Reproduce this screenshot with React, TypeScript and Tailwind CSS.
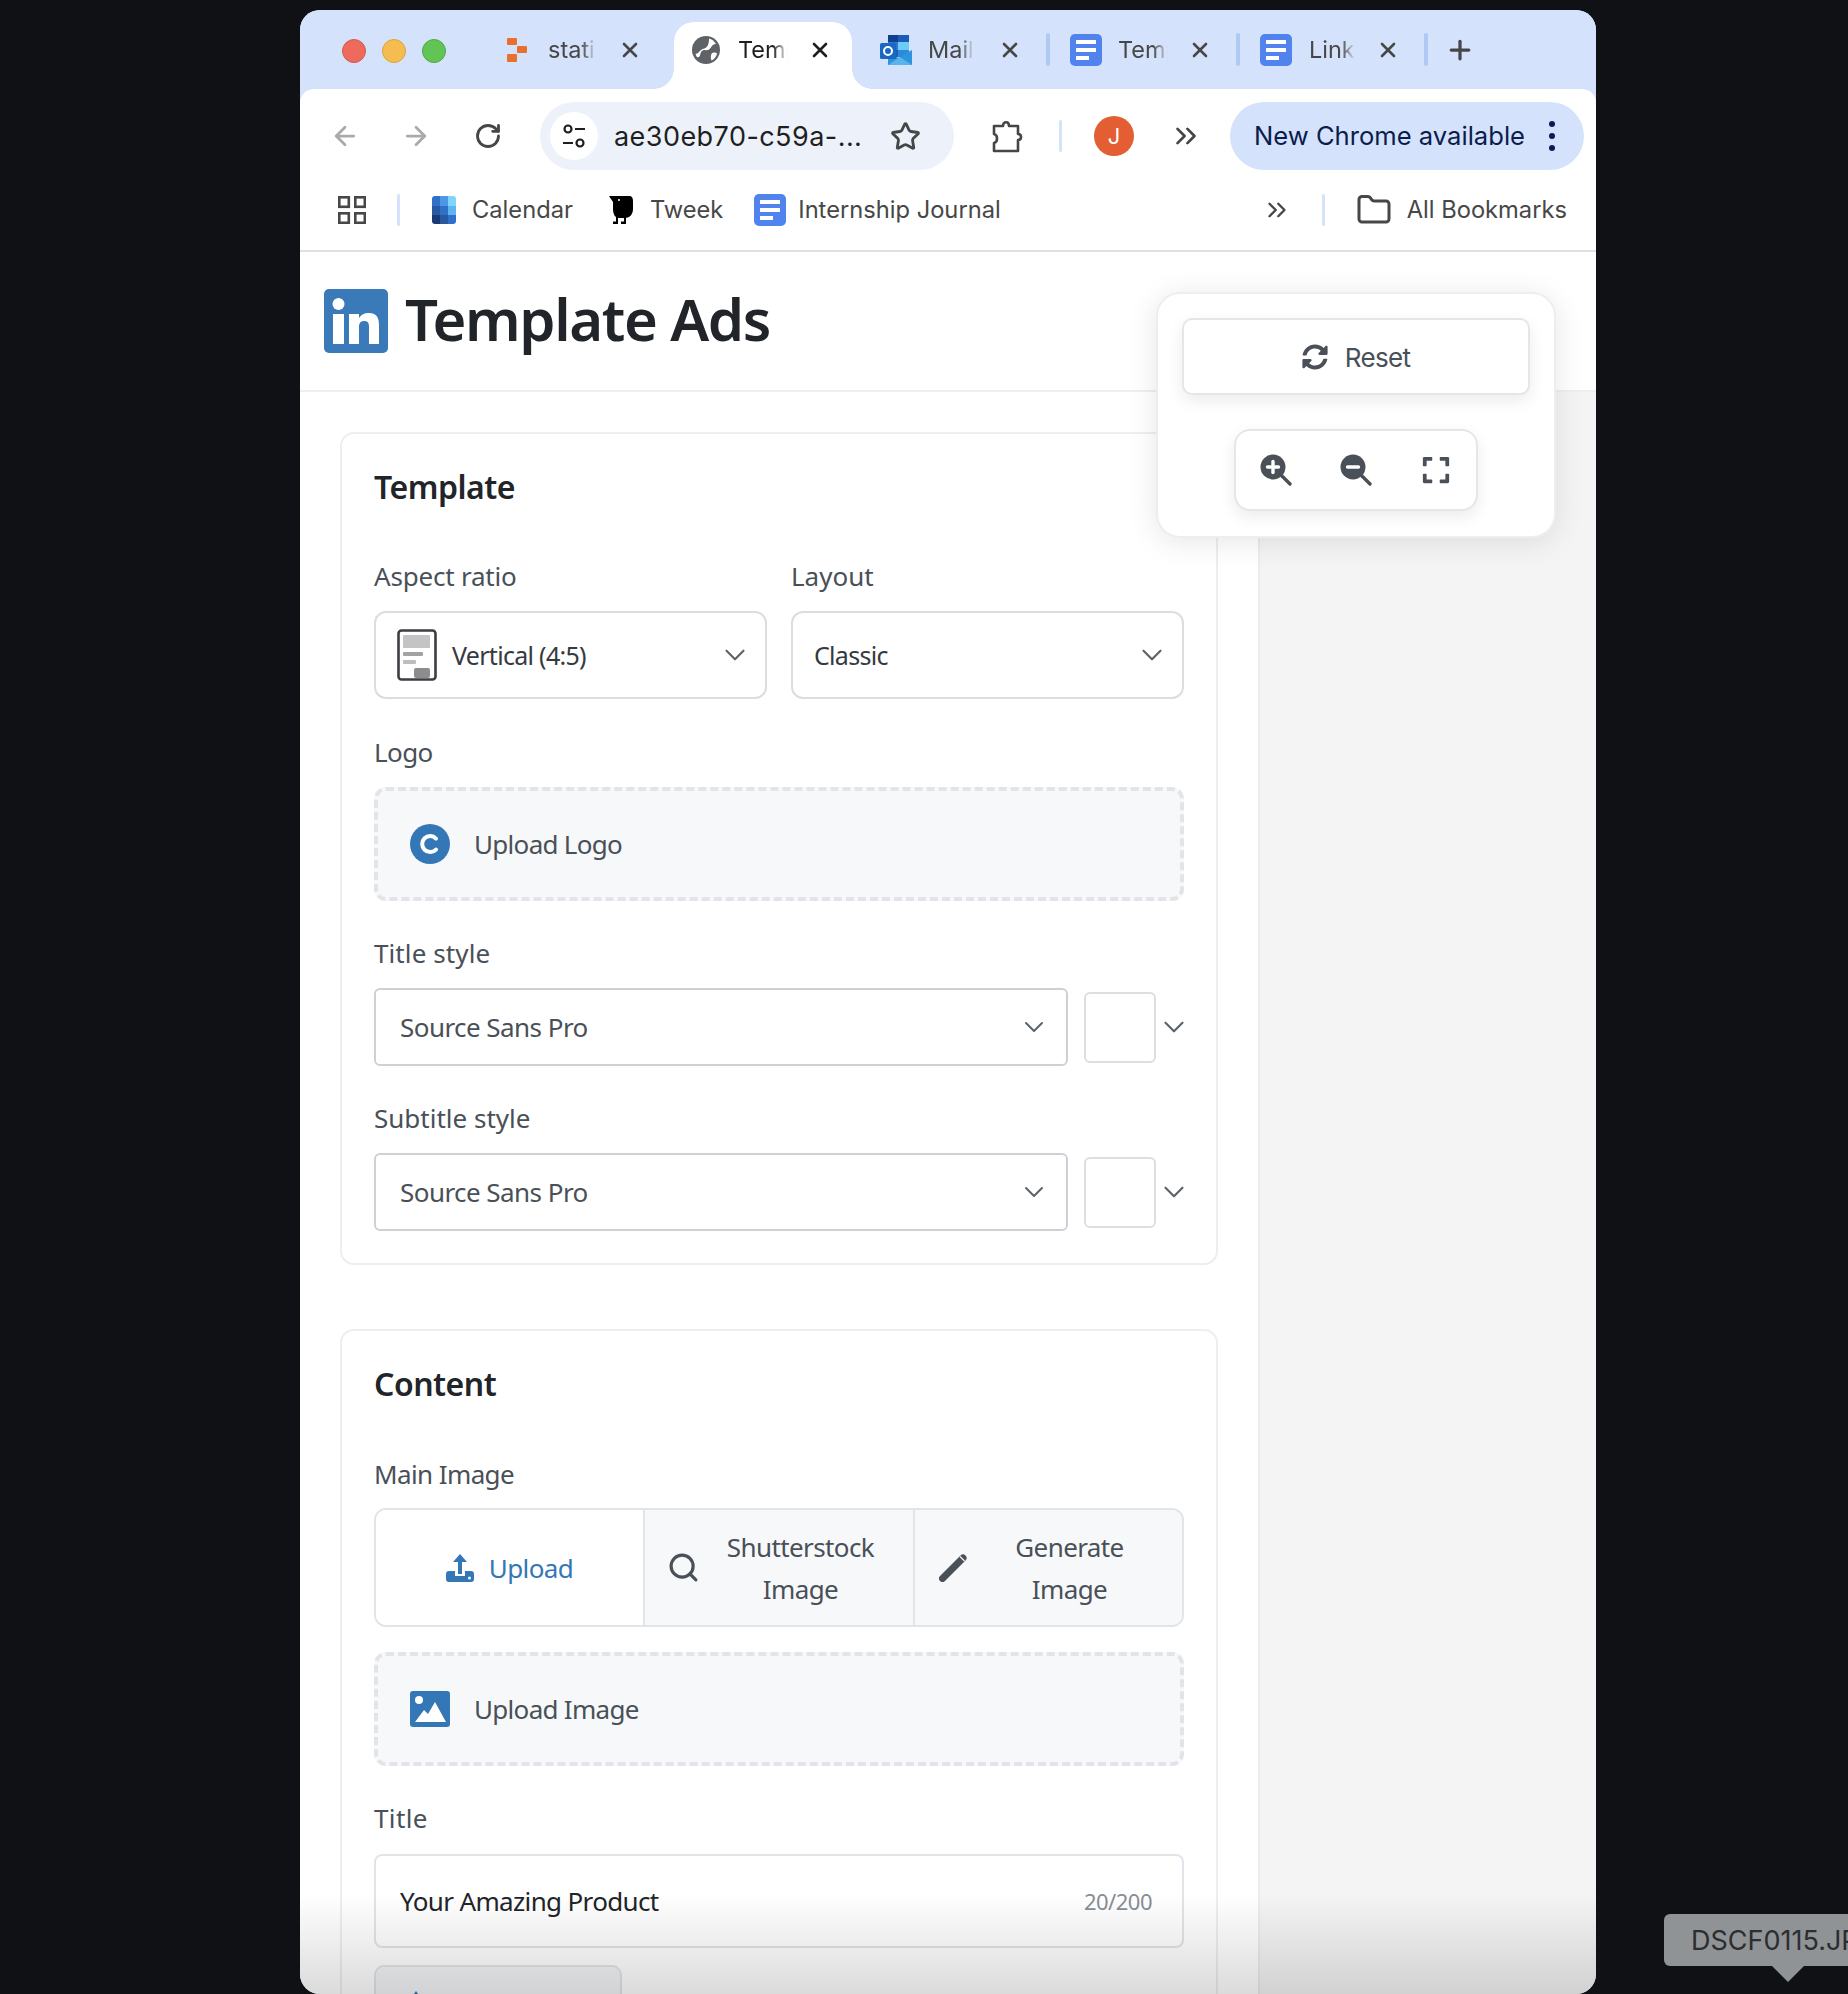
import { ArrowLeft, ArrowRight, ChevronDown, ChevronsRight, Folder, Plus, RotateCw, Search, Star, X } from "lucide-react";
import { FaExpand, FaSyncAlt } from "react-icons/fa";
import type { ReactNode } from "react";

function DocIcon() {
  return (
    <svg width="32" height="32" viewBox="0 0 32 32" className="shrink-0">
      <rect width="32" height="32" rx="5" fill="#5083ee" />
      <rect x="6" y="6" width="20" height="4" fill="#fff" />
      <rect x="6" y="14" width="20" height="4" fill="#fff" />
      <rect x="6" y="22" width="13" height="4" fill="#fff" />
    </svg>
  );
}

function StatiIcon() {
  return (
    <svg width="20" height="24" viewBox="0 0 20 24" className="shrink-0">
      <rect x="0" y="0" width="10" height="7" rx="1" fill="#e8702e" />
      <rect x="10" y="8" width="10" height="7" rx="1" fill="#e8702e" />
      <rect x="0" y="16" width="10" height="8" rx="1" fill="#e8702e" />
    </svg>
  );
}

function GlobeIcon() {
  return (
    <svg width="28" height="28" viewBox="0 0 28 28" className="shrink-0">
      <circle cx="14" cy="14" r="14" fill="#5f6368" />
      <path d="M17 2.500c3 .5 5 2.500 7 5.500-3 0-4 2-5.500 4s-3.500 2.500-5.500 2-4 1-4.500 3.500-1.500 4.500-3.500 3.500c-.5-.5-1-1.500-1.500-3 2.500-.5 3.500-2.500 5.500-4s5-1.500 6.500-4 1.500-5.500 1.500-7.500z" fill="#fff" />
      <path d="M20 17c2-1 4-.5 5 .5-.5 3-3 6-5.500 7-1-2-1-5.500.5-7.500z" fill="#fff" />
    </svg>
  );
}

function OutlookIcon() {
  return (
    <svg width="32" height="30" viewBox="0 0 32 30" className="shrink-0">
      <rect x="8" y="0" width="10" height="7" fill="#123f8f" />
      <rect x="18" y="0" width="11" height="7" fill="#1a5cb8" />
      <rect x="8" y="7" width="10" height="8" fill="#2c77cf" />
      <rect x="18" y="7" width="11" height="8" fill="#6ecbf5" />
      <rect x="8" y="15" width="10" height="7" fill="#1f5eb5" />
      <rect x="18" y="15" width="11" height="7" fill="#2c8ad8" />
      <path d="M8 17l10.500 6L32 15v15H8z" fill="#2f93dd" />
      <path d="M8 30l12-8 12 8z" fill="#58b4ea" />
      <rect x="0" y="8" width="16" height="16" rx="1.500" fill="#1868c4" />
      <circle cx="8" cy="16" r="4" fill="none" stroke="#fff" strokeWidth="2" />
    </svg>
  );
}

function CalendarIcon() {
  return (
    <svg width="24" height="28" viewBox="0 0 24 28" className="shrink-0">
      <defs>
        <clipPath id="calclip">
          <rect width="24" height="28" rx="3" />
        </clipPath>
      </defs>
      <g clipPath="url(#calclip)">
        <rect x="0" y="0" width="8" height="10" fill="#2f70c8" />
        <rect x="8" y="0" width="8" height="10" fill="#4c98e2" />
        <rect x="16" y="0" width="8" height="10" fill="#7dd5fb" />
        <rect x="0" y="10" width="8" height="9" fill="#28589f" />
        <rect x="8" y="10" width="8" height="9" fill="#2f70c8" />
        <rect x="16" y="10" width="8" height="9" fill="#5fb3ee" />
        <rect x="0" y="19" width="8" height="9" fill="#1a3a74" />
        <rect x="8" y="19" width="8" height="9" fill="#28589f" />
        <rect x="16" y="19" width="8" height="9" fill="#2f70c8" />
      </g>
    </svg>
  );
}

function TweekIcon() {
  return (
    <svg width="24" height="28" viewBox="0 0 24 28" className="shrink-0">
      <path d="M0 0h20c3 0 4 2 4 5v8c0 5-3 9-8 9H10C6 22 4 18 4 13V6z" fill="#000" />
      <rect x="7" y="21" width="2" height="6" fill="#000" />
      <rect x="15" y="21" width="2" height="6" fill="#000" />
      <rect x="4" y="25.500" width="5" height="2.500" fill="#000" />
      <rect x="12" y="25.500" width="5" height="2.500" fill="#000" />
      <circle cx="10" cy="4" r="1" fill="#fff" />
    </svg>
  );
}

function TuneIcon() {
  return (
    <svg width="24" height="26" viewBox="0 0 24 26" fill="none" stroke="#1f1f1f" strokeWidth="2.200" className="shrink-0">
      <circle cx="6" cy="6" r="3.500" />
      <path d="M13 6h10" />
      <circle cx="18" cy="20" r="3.500" />
      <path d="M1 20h10" />
    </svg>
  );
}

function PuzzleIcon() {
  return (
    <svg width="32" height="34" viewBox="0 0 32 34" fill="none" stroke="#444746" strokeWidth="2.600" strokeLinejoin="round" className="shrink-0">
      <path d="M2 7h9c0-5 6-5 6 0h9v8c4 0 4 6 0 6v11H2v-8c4-1 4-8 0-9z" />
    </svg>
  );
}

function AppsIcon() {
  return (
    <svg width="28" height="28" viewBox="0 0 28 28" fill="none" stroke="#474747" strokeWidth="2.600" className="shrink-0">
      <rect x="1.300" y="1.300" width="9.500" height="9.500" />
      <rect x="17.300" y="1.300" width="9.500" height="9.500" />
      <rect x="1.300" y="17.300" width="9.500" height="9.500" />
      <rect x="17.300" y="17.300" width="9.500" height="9.500" />
    </svg>
  );
}

function LinkedInLogo() {
  return (
    <svg width="64" height="64" viewBox="0 0 64 64" className="shrink-0">
      <rect width="64" height="64" rx="5" fill="#3a7ab8" />
      <circle cx="14.500" cy="15" r="6" fill="#fff" />
      <rect x="9" y="25" width="11" height="30" fill="#fff" />
      <path d="M25 25h10v4c2-3 5-5 10-5 8 0 10 5 10 12v19H45V38c0-4-1-6-5-6s-5 3-5 6v17H25z" fill="#fff" />
    </svg>
  );
}

function RatioIcon() {
  return (
    <svg width="40" height="52" viewBox="0 0 40 52" className="shrink-0">
      <rect x="1.500" y="1.500" width="37" height="49" rx="3" fill="#fff" stroke="#3a3f44" strokeWidth="2.600" />
      <rect x="6" y="6" width="27" height="13" rx="1" fill="#c4c4c4" />
      <rect x="6" y="23" width="20" height="4" rx="1" fill="#a3a3a3" />
      <rect x="6" y="31" width="13" height="4" rx="1" fill="#bdbdbd" />
      <rect x="17" y="39" width="16" height="10" rx="2" fill="#8c8c8c" />
    </svg>
  );
}

function ZoomGlyph({ minus }: { minus?: boolean }) {
  return (
    <svg width="32" height="32" viewBox="0 0 32 32" className="shrink-0">
      <circle cx="13" cy="13" r="12.500" fill="#495057" />
      <path d="M22 22l8 8" stroke="#495057" strokeWidth="3.400" strokeLinecap="round" />
      <path d="M7.500 13h11" stroke="#fff" strokeWidth="3.400" strokeLinecap="round" />
      {!minus && <path d="M13 7.500v11" stroke="#fff" strokeWidth="3.400" strokeLinecap="round" />}
    </svg>
  );
}

function LogoGlyph() {
  return (
    <svg width="40" height="40" viewBox="0 0 40 40" className="shrink-0">
      <circle cx="20" cy="20" r="20" fill="#3477b6" />
      <path d="M26 14.500a8 8 0 1 0 0 11" fill="none" stroke="#fff" strokeWidth="4" strokeLinecap="round" />
    </svg>
  );
}

function ImageGlyph() {
  return (
    <svg width="40" height="36" viewBox="0 0 40 36" className="shrink-0">
      <rect width="40" height="36" rx="3" fill="#3477b6" />
      <circle cx="9" cy="9" r="4" fill="#fff" />
      <path d="M5 31l9-12 4 4 7-12 11 20z" fill="#fff" />
    </svg>
  );
}

function UploadGlyph() {
  return (
    <svg width="28" height="28" viewBox="0 0 28 28" className="shrink-0">
      <path d="M14 0l7 8h-5v12h-4V8H7z" fill="#3477b6" />
      <path d="M3 17h6v5h10v-5h6c2 0 3 1 3 3v5c0 2-1 3-3 3H3c-2 0-3-1-3-3v-5c0-2 1-3 3-3z" fill="#3477b6" />
      <circle cx="23.500" cy="24" r="1.500" fill="#fff" />
    </svg>
  );
}

function PencilGlyph() {
  return (
    <svg width="28" height="28" viewBox="0 0 28 28" className="shrink-0">
      <path d="M3.500 24.500L24 4" stroke="#495057" strokeWidth="7" strokeLinecap="round" />
      <path d="M21 2.500l4.500 4.500" stroke="#f7f8fa" strokeWidth="1.200" />
    </svg>
  );
}

function Tab({ icon, label, textClass, closeClass, active }: { icon: ReactNode; label: string; textClass: string; closeClass: string; active?: boolean }) {
  return (
    <>
      {icon}
      <span className={`${textClass} shrink-0 overflow-hidden whitespace-nowrap text-[23.500px] leading-[30px] [mask-image:linear-gradient(to_right,black_70%,transparent)] ${active ? "text-[#1f1f1f]" : "text-[#474747]"}`}>
        {label}
      </span>
      <X size={24} strokeWidth={2.6} className={`${closeClass} shrink-0 ${active ? "text-[#1f1f1f]" : "text-[#474747]"}`} />
    </>
  );
}

function TabBar() {
  return (
    <div className="flex h-[79px] shrink-0 items-center bg-[#d5e2fb] pt-[12px]">
      <div className="ml-[42px] flex -translate-y-[5px] gap-[16px]">
        <span className="h-[24px] w-[24px] rounded-full border border-[#d9574c] bg-[#ee6a5f]" />
        <span className="h-[24px] w-[24px] rounded-full border border-[#dba23b] bg-[#f5bd4f]" />
        <span className="h-[24px] w-[24px] rounded-full border border-[#50a93f] bg-[#61c454]" />
      </div>
      <div className="ml-[61px] flex -translate-y-[6px] items-center">
        <Tab icon={<StatiIcon />} label="stati" textClass="ml-[21px] w-[48px]" closeClass="ml-[22px]" />
      </div>
      <div className="relative ml-[32px] flex h-[67px] w-[178px] items-center rounded-t-[20px] bg-white pl-[18px]">
        <span className="absolute bottom-0 -left-[20px] h-[20px] w-[20px] bg-[radial-gradient(circle_at_0_0,transparent_19.500px,white_20px)]" />
        <span className="absolute -right-[20px] bottom-0 h-[20px] w-[20px] bg-[radial-gradient(circle_at_100%_0,transparent_19.500px,white_20px)]" />
        <div className="flex -translate-y-[6px] items-center">
          <Tab active icon={<GlobeIcon />} label="Temp" textClass="ml-[18px] w-[50px]" closeClass="ml-[20px]" />
        </div>
      </div>
      <div className="ml-[28px] flex -translate-y-[6px] items-center">
        <Tab icon={<OutlookIcon />} label="Mail" textClass="ml-[16px] w-[46px]" closeClass="ml-[24px]" />
        <span className="ml-[24px] h-[33px] w-[4px] rounded-full bg-[#afc9f4]" />
        <span className="ml-[20px]" />
        <Tab icon={<DocIcon />} label="Temp" textClass="ml-[16px] w-[50px]" closeClass="ml-[20px]" />
        <span className="ml-[24px] h-[33px] w-[4px] rounded-full bg-[#afc9f4]" />
        <span className="ml-[20px]" />
        <Tab icon={<DocIcon />} label="Link" textClass="ml-[17px] w-[46px]" closeClass="ml-[21px]" />
        <span className="ml-[24px] h-[33px] w-[4px] rounded-full bg-[#afc9f4]" />
        <Plus size={30} strokeWidth={2.6} className="ml-[17px] text-[#474747]" />
      </div>
    </div>
  );
}

function Toolbar() {
  return (
    <div className="flex h-[94px] shrink-0 items-center rounded-t-[14px] bg-white">
      <ArrowLeft size={30} strokeWidth={2.2} className="ml-[30px] text-[#a9aaab]" />
      <ArrowRight size={30} strokeWidth={2.2} className="ml-[41px] text-[#a9aaab]" />
      <RotateCw size={28} strokeWidth={2.4} className="ml-[43px] text-[#444746]" />
      <div className="ml-[38px] flex h-[68px] w-[414px] items-center rounded-full bg-[#edf2fa] pl-[10px]">
        <span className="flex h-[48px] w-[48px] items-center justify-center rounded-full bg-white">
          <TuneIcon />
        </span>
        <span className="ml-[16px] w-[247px] whitespace-nowrap pt-[2px] text-[27px] tracking-[0.45px] text-[#1f1f1f]">ae30eb70-c59a-...</span>
        <Star size={31} strokeWidth={2.2} className="ml-[29px] text-[#444746]" />
      </div>
      <span className="ml-[38px]">
        <PuzzleIcon />
      </span>
      <span className="ml-[35px] h-[32px] w-[3px] rounded-full bg-[#d5e2fb]" />
      <span className="ml-[32px] flex h-[40px] w-[40px] items-center justify-center rounded-full bg-[#e35e33] text-[22px] text-white">J</span>
      <ChevronsRight size={34} strokeWidth={1.9} className="ml-[35px] text-[#444746]" />
      <div className="ml-[27px] flex h-[68px] w-[354px] items-center rounded-full bg-[#d5e2fb] pl-[24px]">
        <span className="whitespace-nowrap pt-[1px] text-[25.600px] text-[#0a1d4d]">New Chrome available</span>
        <span className="ml-[24px] flex flex-col gap-[6px]">
          <span className="h-[6px] w-[6px] rounded-full bg-[#0a1d4d]" />
          <span className="h-[6px] w-[6px] rounded-full bg-[#0a1d4d]" />
          <span className="h-[6px] w-[6px] rounded-full bg-[#0a1d4d]" />
        </span>
      </div>
    </div>
  );
}

function Bookmarks() {
  return (
    <div className="flex h-[69px] shrink-0 items-center border-b-2 border-[#e0e0e0] bg-white pb-[13px] text-[23.700px] text-[#474747]">
      <span className="ml-[38px]">
        <AppsIcon />
      </span>
      <span className="ml-[31px] h-[32px] w-[3px] rounded-full bg-[#d5e2fb]" />
      <span className="ml-[32px]">
        <CalendarIcon />
      </span>
      <span className="ml-[16px]">Calendar</span>
      <span className="ml-[36px]">
        <TweekIcon />
      </span>
      <span className="ml-[17px]">Tweek</span>
      <span className="ml-[31px]">
        <DocIcon />
      </span>
      <span className="ml-[12px] whitespace-nowrap">Internship Journal</span>
      <ChevronsRight size={30} strokeWidth={1.9} className="ml-[261px] shrink-0" />
      <span className="ml-[30px] h-[32px] w-[3px] shrink-0 rounded-full bg-[#d5e2fb]" />
      <Folder size={36} strokeWidth={2} className="ml-[31px] shrink-0" />
      <span className="ml-[15px] whitespace-nowrap">All Bookmarks</span>
    </div>
  );
}

function FieldLabel({ children, className }: { children: ReactNode; className: string }) {
  return <div className={`${className} h-[36px] text-[26px] leading-[34px] text-[#495057]`}>{children}</div>;
}

function Dropzone({ icon, label, className }: { icon: ReactNode; label: string; className: string }) {
  return (
    <div className={`${className} flex h-[114px] items-center rounded-[12px] border-4 border-dashed border-[#e2e4e9] bg-[#f7f8fa] pl-[32px]`}>
      <span className="flex w-[40px] justify-center">{icon}</span>
      <span className="ml-[24px] text-[26px] tracking-[-0.7px] text-[#495057]">{label}</span>
    </div>
  );
}

function FontRow() {
  return (
    <div className="mt-[16px] flex items-center">
      <div className="flex h-[78px] w-[694px] shrink-0 items-center justify-between rounded-[6px] border-2 border-[#cdd1d6] pr-[16px] pl-[24px]">
        <span className="text-[26px] tracking-[-0.55px] text-[#495057]">Source Sans Pro</span>
        <ChevronDown size={32} strokeWidth={1.5} className="shrink-0 text-[#5c636b]" />
      </div>
      <span className="ml-[16px] h-[71px] w-[72px] shrink-0 rounded-[6px] border-2 border-[#dcdee2]" />
      <ChevronDown size={34} strokeWidth={1.5} className="ml-[1px] shrink-0 text-[#5c636b]" />
    </div>
  );
}

function TemplateCard() {
  return (
    <section className="w-[878px] rounded-[14px] border-2 border-[#eceef2] px-[32px] pt-[33px] pb-[32px]">
      <h2 className="h-[40px] text-[32px] leading-[40px] font-semibold tracking-[-0.5px] text-[#212529]">Template</h2>
      <div className="mt-[52px] grid grid-cols-2 gap-x-[24px]">
        <div>
          <FieldLabel className="tracking-[-0.2px]">Aspect ratio</FieldLabel>
          <div className="mt-[16px] flex h-[88px] items-center rounded-[12px] border-2 border-[#dcdde0] pr-[13px] pl-[21px]">
            <RatioIcon />
            <span className="ml-[15px] flex-1 pt-[2px] text-[25px] tracking-[-0.7px] text-[#343a40]">Vertical (4:5)</span>
            <ChevronDown size={34} strokeWidth={1.5} className="shrink-0 text-[#5c636b]" />
          </div>
        </div>
        <div>
          <FieldLabel className="tracking-[0px]">Layout</FieldLabel>
          <div className="mt-[16px] flex h-[88px] items-center rounded-[12px] border-2 border-[#dcdde0] pr-[13px] pl-[21px]">
            <span className="flex-1 pt-[2px] text-[25px] tracking-[-0.7px] text-[#343a40]">Classic</span>
            <ChevronDown size={34} strokeWidth={1.5} className="shrink-0 text-[#5c636b]" />
          </div>
        </div>
      </div>
      <FieldLabel className="mt-[36px] tracking-[-0.6px]">Logo</FieldLabel>
      <Dropzone className="mt-[16px]" icon={<LogoGlyph />} label="Upload Logo" />
      <FieldLabel className="mt-[35px] tracking-[0.1px]">Title style</FieldLabel>
      <FontRow />
      <FieldLabel className="mt-[35px] tracking-[0px]">Subtitle style</FieldLabel>
      <FontRow />
    </section>
  );
}

function ContentCard() {
  return (
    <section className="mt-[64px] w-[878px] rounded-t-[14px] border-2 border-[#eceef2] px-[32px] pt-[33px] pb-[31px]">
      <h2 className="h-[40px] text-[32px] leading-[40px] font-semibold tracking-[-0.5px] text-[#212529]">Content</h2>
      <FieldLabel className="mt-[53px] tracking-[-0.6px]">Main Image</FieldLabel>
      <div className="mt-[15px] grid h-[119px] grid-cols-[267px_270px_1fr] overflow-hidden rounded-[12px] border-2 border-[#e2e4e9] text-[26px] leading-[42px] tracking-[-0.6px] text-[#495057]">
        <div className="flex items-center justify-center gap-[15px] bg-white text-[#3477b6]">
          <UploadGlyph />
          <span>Upload</span>
        </div>
        <div className="flex items-center border-l-2 border-[#e2e4e9] bg-[#f7f8fa] pr-[12px] pl-[22px]">
          <Search size={33} strokeWidth={2.3} className="shrink-0" />
          <span className="flex-1 text-center">
            Shutterstock
            <br />
            Image
          </span>
        </div>
        <div className="flex items-center border-l-2 border-[#e2e4e9] bg-[#f7f8fa] pr-[10px] pl-[24px]">
          <PencilGlyph />
          <span className="flex-1 text-center">
            Generate
            <br />
            Image
          </span>
        </div>
      </div>
      <Dropzone className="mt-[25px]" icon={<ImageGlyph />} label="Upload Image" />
      <FieldLabel className="mt-[35px] tracking-[0.4px]">Title</FieldLabel>
      <div className="mt-[17px] flex h-[94px] items-center justify-between rounded-[8px] border-2 border-[#e2e4e9] pr-[30px] pl-[24px]">
        <span className="pt-[1px] text-[26px] tracking-[-0.65px] text-[#212529]">Your Amazing Product</span>
        <span className="text-[22px] tracking-[-0.5px] text-[#868e96]">20/200</span>
      </div>
      <div className="mt-[17px] h-[80px] w-[248px] rounded-[10px] border-2 border-[#e2e4e9] bg-[#f4f5f7] pt-[24px] pl-[33px]">
        <svg width="14" height="10" viewBox="0 0 14 10">
          <path d="M7 0l7 10H0z" fill="#3477b6" />
        </svg>
      </div>
    </section>
  );
}

function FloatingControls() {
  return (
    <div className="absolute top-[282px] left-[856px] flex h-[246px] w-[400px] flex-col items-center rounded-[24px] border-2 border-[#eceef1] bg-white pt-[24px] shadow-[0_4px_30px_rgba(0,0,0,0.1)]">
      <div className="flex h-[77px] w-[348px] items-center justify-center gap-[17px] rounded-[10px] border-2 border-[#e3e6ea] bg-white text-[#495057] shadow-[0_6px_16px_rgba(0,0,0,0.08)]">
        <FaSyncAlt size={26} />
        <span className="pt-[2px] text-[26px] tracking-[-0.7px]">Reset</span>
      </div>
      <div className="mt-[34px] flex h-[82px] w-[244px] items-center rounded-[16px] border-2 border-[#e3e6ea] bg-white pl-[24px] text-[#495057] shadow-[0_6px_16px_rgba(0,0,0,0.08)]">
        <ZoomGlyph />
        <span className="ml-[48px]">
          <ZoomGlyph minus />
        </span>
        <FaExpand size={30} className="ml-[49px]" />
      </div>
    </div>
  );
}

export default function App() {
  return (
    <div className="relative h-[1994px] w-[1848px] overflow-hidden bg-[#101114] pt-[10px] pl-[300px] font-['Inter',sans-serif]">
      <div className="relative flex h-[1984px] w-[1296px] flex-col overflow-hidden rounded-[20px] bg-[#d5e2fb]">
        <TabBar />
        <Toolbar />
        <Bookmarks />
        <header className="flex h-[140px] shrink-0 items-center border-b-2 border-[#eceef2] bg-white pl-[24px] font-['Noto_Sans',sans-serif]">
          <LinkedInLogo />
          <h1 className="mb-[5px] ml-[17px] text-[58px] font-semibold tracking-[-1.4px] whitespace-nowrap text-[#212529]">Template Ads</h1>
        </header>
        <main className="flex min-h-0 flex-1 font-['Noto_Sans',sans-serif]">
          <div className="w-[960px] shrink-0 border-r-2 border-[#ebebf0] bg-white pt-[40px] pl-[40px]">
            <TemplateCard />
            <ContentCard />
          </div>
          <div className="flex-1 bg-[#f4f4f4]" />
        </main>
        <FloatingControls />
        <div className="pointer-events-none absolute right-0 bottom-0 left-0 h-[100px] bg-gradient-to-b from-transparent to-[rgba(0,0,0,0.14)]" />
      </div>
      <div className="absolute top-[1914px] left-[1664px] flex h-[52px] w-[200px] items-center rounded-[6px] bg-[#909395] pt-[2px] pl-[27px] text-[27px] text-[#2b2d30]">
        <span className="whitespace-nowrap">DSCF0115.JPG</span>
        <span className="absolute top-[51px] left-[107px] h-[17px] w-[34px] bg-[#909395] [clip-path:polygon(0_0,100%_0,50%_100%)]" />
      </div>
    </div>
  );
}
